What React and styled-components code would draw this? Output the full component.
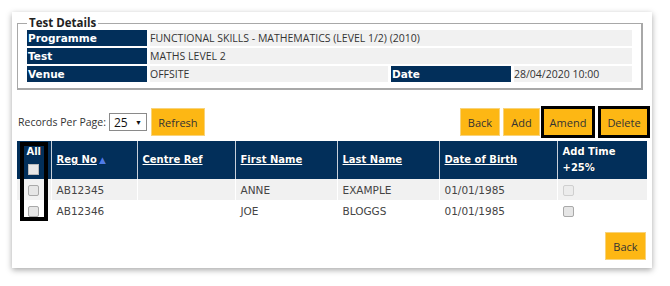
import React from 'react';
import styled, { createGlobalStyle } from 'styled-components';

const Navy = '#022f5a';
const Yellow = '#fdb714';

const GlobalStyle = createGlobalStyle`
  body {
    margin: 0;
    background: #ffffff;
    font-family: "Open Sans", "Liberation Sans", sans-serif;
    color: #333333;
  }
`;

const Page = styled.div`
  padding: 12px 18px 18px 12px;
`;

const Card = styled.div`
  width: 640px;
  height: 256px;
  box-sizing: border-box;
  padding: 4px 5px 5px 5px;
  background: #ffffff;
  box-shadow: 0 2px 6px rgba(0, 0, 0, 0.35);
  display: flex;
  flex-direction: column;
`;

const Fieldset = styled.fieldset`
  margin: 0 4px 0 0;
  padding: 0 9px 6px 9px;
  border-style: solid;
  border-color: #a8a8a8;
  border-width: 1px 2px 2px 1px;
`;

const Legend = styled.legend`
  padding: 0 2px;
  font-size: 11.5px;
  font-weight: 700;
  color: #222;
  line-height: 14px;
`;

const DetailGrid = styled.div`
  display: grid;
  grid-template-columns: 120px 238px 120px 1fr;
  column-gap: 3px;
  row-gap: 2px;
`;

const Label = styled.div`
  background: ${Navy};
  color: #ffffff;
  font-family: "DejaVu Sans", Verdana, sans-serif;
  font-weight: 700;
  font-size: 10.5px;
  line-height: 16px;
  height: 16px;
  padding-left: 1px;
`;

const Value = styled.div`
  background: #f1f1f1;
  font-size: 10.5px;
  line-height: 16px;
  height: 16px;
  color: #333;
  grid-column: ${(p) => p.span || 'auto'};
  white-space: nowrap;
`;

const Toolbar = styled.div`
  display: flex;
  justify-content: space-between;
  align-items: center;
  margin-top: 17px;
  height: 30px;
  margin-right: -3px;
`;

const Group = styled.div`
  display: flex;
  align-items: center;
`;

const RecordsLabel = styled.span`
  font-size: 10.5px;
  color: #333;
  margin-left: 1px;
`;

const Select = styled.div`
  width: 38px;
  height: 18px;
  box-sizing: border-box;
  border: 1px solid #8a8a8a;
  display: flex;
  align-items: center;
  justify-content: space-between;
  padding: 0 4px 0 4px;
  font-size: 12px;
  color: #111;
  margin: 0 4px 0 3px;
  background: #fff;
`;

const Caret = styled.span`
  font-size: 7px;
  color: #111;
`;

const Button = styled.button`
  background: ${Yellow};
  border: 1px solid #f8d37a;
  color: #333;
  font-family: "Open Sans", "Liberation Sans", sans-serif;
  font-size: 11px;
  height: 28px;
  width: ${(p) => p.w}px;
  padding: 0;
  margin-left: ${(p) => p.gap || 0}px;
  cursor: pointer;
  outline: ${(p) => (p.highlight ? '3px solid #000' : 'none')};
  outline-offset: -1px;
`;

const TableWrap = styled.div`
  position: relative;
  margin-top: 4px;
`;

const Table = styled.table`
  width: 100%;
  table-layout: fixed;
  border-collapse: collapse;
  font-family: "DejaVu Sans", Verdana, sans-serif;
  font-size: 10px;
`;

const Th = styled.th`
  background: ${Navy};
  color: #ffffff;
  font-weight: 700;
  font-size: 10px;
  text-align: ${(p) => p.align || 'left'};
  padding: 0 5px;
  height: 38px;
  width: ${(p) => p.w}px;
  border-left: 1px solid #c8d0da;
  &:first-child {
    border-left: none;
  }
  line-height: 16px;
  text-shadow: 0 0 1px rgba(0, 0, 0, 0.6);
`;

const SortLink = styled.span`
  text-decoration: underline;
`;

const SortArrow = styled.span`
  color: #4f7be8;
  font-size: 9px;
  margin-left: 2px;
`;

const Tr = styled.tr`
  background: ${(p) => (p.alt ? '#f1f1f1' : '#ffffff')};
`;

const Td = styled.td`
  height: 21px;
  padding: 0 5px;
  color: #444;
  font-size: 10.5px;
  text-align: ${(p) => p.align || 'left'};
  border-left: 1px solid #ffffff;
  &:first-child {
    border-left: none;
  }
`;

const Check = styled.span`
  display: inline-block;
  width: 9px;
  height: 9px;
  border: 1px solid ${(p) => (p.faint ? '#cfcfcf' : '#a9a9a9')};
  border-radius: 2px;
  background: ${(p) => (p.faint ? '#ececec' : '#e6e6e6')};
  vertical-align: middle;
`;

const HeadCheck = styled(Check)`
  background: #e8e8e8;
  border-color: #bbb;
  border-radius: 0;
  margin-top: 2px;
`;

const ColumnHighlight = styled.div`
  position: absolute;
  left: 3px;
  top: 1px;
  width: 28px;
  height: 79px;
  box-sizing: border-box;
  border: 4px solid #000;
  pointer-events: none;
`;

const Footer = styled.div`
  display: flex;
  justify-content: flex-end;
  margin-top: 11px;
  padding-right: 1px;
`;

const rows = [
  { reg: 'AB12345', first: 'ANNE', last: 'EXAMPLE', dob: '01/01/1985' },
  { reg: 'AB12346', first: 'JOE', last: 'BLOGGS', dob: '01/01/1985' },
];

export default function App() {
  return (
    <>
      <GlobalStyle />
      <Page>
        <Card>
          <Fieldset>
            <Legend>Test Details</Legend>
            <DetailGrid>
              <Label>Programme</Label>
              <Value span="span 3">FUNCTIONAL SKILLS - MATHEMATICS (LEVEL 1/2) (2010)</Value>
              <Label>Test</Label>
              <Value span="span 3">MATHS LEVEL 2</Value>
              <Label>Venue</Label>
              <Value>OFFSITE</Value>
              <Label>Date</Label>
              <Value>28/04/2020 10:00</Value>
            </DetailGrid>
          </Fieldset>

          <Toolbar>
            <Group>
              <RecordsLabel>Records Per Page:</RecordsLabel>
              <Select>
                25 <Caret>▼</Caret>
              </Select>
              <Button w={54}>Refresh</Button>
            </Group>
            <Group>
              <Button w={40}>Back</Button>
              <Button w={37} gap={3}>Add</Button>
              <Button w={50} gap={3} highlight>Amend</Button>
              <Button w={48} gap={7} highlight>Delete</Button>
              <span style={{ width: 2 }} />
            </Group>
          </Toolbar>

          <TableWrap>
            <Table>
              <colgroup>
                <col style={{ width: 34 }} />
                <col style={{ width: 86 }} />
                <col style={{ width: 98 }} />
                <col style={{ width: 102 }} />
                <col style={{ width: 102 }} />
                <col style={{ width: 118 }} />
                <col style={{ width: 90 }} />
              </colgroup>
              <thead>
                <tr>
                  <Th align="center">
                    All
                    <br />
                    <HeadCheck />
                  </Th>
                  <Th>
                    <SortLink>Reg No</SortLink>
                    <SortArrow>▲</SortArrow>
                  </Th>
                  <Th><SortLink>Centre Ref</SortLink></Th>
                  <Th><SortLink>First Name</SortLink></Th>
                  <Th><SortLink>Last Name</SortLink></Th>
                  <Th><SortLink>Date of Birth</SortLink></Th>
                  <Th>Add Time<br />+25%</Th>
                </tr>
              </thead>
              <tbody>
                {rows.map((r, i) => (
                  <Tr key={r.reg} alt={i % 2 === 0}>
                    <Td align="center"><Check /></Td>
                    <Td>{r.reg}</Td>
                    <Td></Td>
                    <Td>{r.first}</Td>
                    <Td>{r.last}</Td>
                    <Td>{r.dob}</Td>
                    <Td><Check faint={i === 0} /></Td>
                  </Tr>
                ))}
              </tbody>
            </Table>
            <ColumnHighlight />
          </TableWrap>

          <Footer>
            <Button w={41}>Back</Button>
          </Footer>
        </Card>
      </Page>
    </>
  );
}
